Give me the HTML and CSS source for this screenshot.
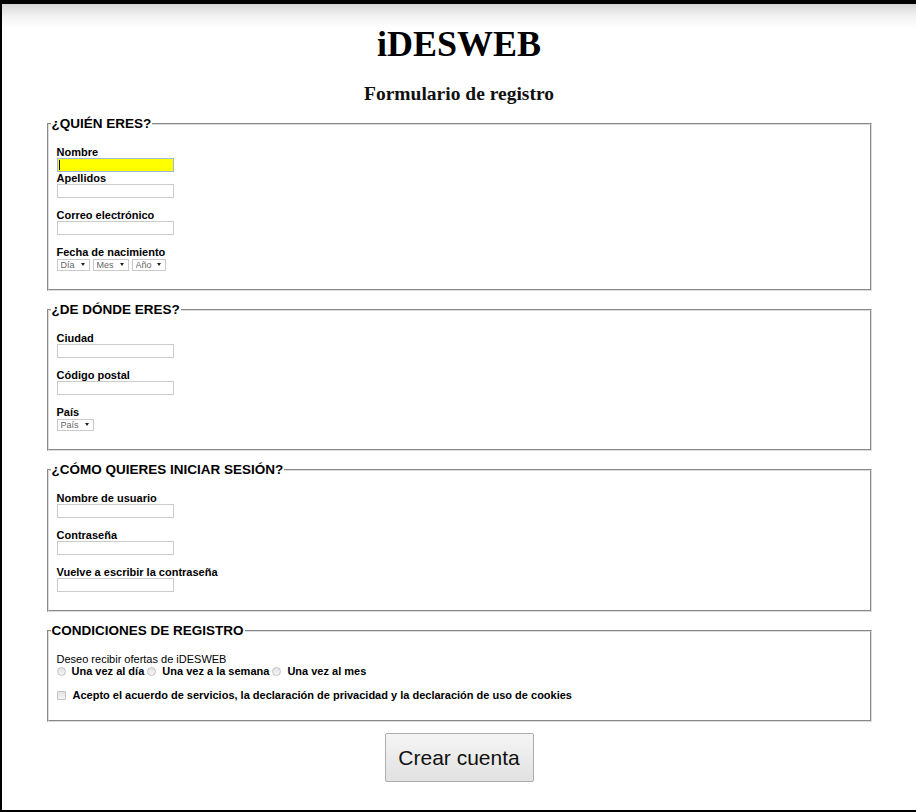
FILE: index.html
```html
<!DOCTYPE html>
<html lang="es">
<head>
<meta charset="utf-8">
<title>iDESWEB - Formulario de registro</title>
<link rel="stylesheet" href="styles.css">
</head>
<body>
<div class="page">
  <h1 class="logo">iDESWEB</h1>
  <h2 class="subtitle">Formulario de registro</h2>
  <form class="form">
    <fieldset class="group">
      <legend class="legend">¿QUIÉN ERES?</legend>
      <div class="group-body">
        <label class="label" for="nombre">Nombre</label>
        <span class="focus-wrap"><input class="field field--focus" id="nombre" type="text"></span>
        <label class="label" for="apellidos">Apellidos</label>
        <input class="field" id="apellidos" type="text">
        <label class="label label--spaced" for="correo">Correo electrónico</label>
        <input class="field" id="correo" type="email">
        <label class="label label--spaced" for="dia">Fecha de nacimiento</label>
        <div class="selects">
          <span class="sel"><select class="select select--dia" id="dia"><option>Día</option></select></span>
          <span class="sel"><select class="select select--mes"><option>Mes</option></select></span>
          <span class="sel"><select class="select select--anyo"><option>Año</option></select></span>
        </div>
      </div>
    </fieldset>

    <fieldset class="group">
      <legend class="legend">¿DE DÓNDE ERES?</legend>
      <div class="group-body">
        <label class="label" for="ciudad">Ciudad</label>
        <input class="field" id="ciudad" type="text">
        <label class="label label--spaced" for="cp">Código postal</label>
        <input class="field" id="cp" type="text">
        <label class="label label--spaced" for="pais">País</label>
        <div class="selects">
          <span class="sel"><select class="select select--pais" id="pais"><option>País</option></select></span>
        </div>
      </div>
    </fieldset>

    <fieldset class="group">
      <legend class="legend">¿CÓMO QUIERES INICIAR SESIÓN?</legend>
      <div class="group-body">
        <label class="label" for="usuario">Nombre de usuario</label>
        <input class="field" id="usuario" type="text">
        <label class="label label--spaced" for="pass">Contraseña</label>
        <input class="field" id="pass" type="password">
        <label class="label label--spaced" for="pass2">Vuelve a escribir la contraseña</label>
        <input class="field" id="pass2" type="password">
      </div>
    </fieldset>

    <fieldset class="group">
      <legend class="legend">CONDICIONES DE REGISTRO</legend>
      <div class="group-body">
        <div class="text">Deseo recibir ofertas de iDESWEB</div>
        <div class="options">
          <label class="option"><input class="radio" type="radio" name="ofertas">Una vez al día</label>
          <label class="option"><input class="radio" type="radio" name="ofertas">Una vez a la semana</label>
          <label class="option"><input class="radio" type="radio" name="ofertas">Una vez al mes</label>
        </div>
        <div class="options options--check">
          <label class="option"><input class="check" type="checkbox">Acepto el acuerdo de servicios, la declaración de privacidad y la declaración de uso de cookies</label>
        </div>
      </div>
    </fieldset>

    <button class="submit" type="submit">Crear cuenta</button>
  </form>
</div>
</body>
</html>
```

FILE: styles.css
```css
html, body {
  margin: 0;
  padding: 0;
  background: #fff;
}

.page {
  box-sizing: border-box;
  height: 812px;
  border-top: 4px solid #000;
  border-left: 2px solid #000;
  border-bottom: 2px solid #000;
  background: linear-gradient(#d6d6d6 0, #f2f2f2 12px, #fff 24px);
  padding-top: 20px;
  font-family: "Liberation Sans", Arial, sans-serif;
  color: #000;
}

.logo {
  margin: 0;
  font-family: "Liberation Serif", "Times New Roman", serif;
  font-weight: bold;
  font-size: 36px;
  line-height: 40px;
  text-align: center;
  color: #000;
}

.subtitle {
  margin: 19px 0 0;
  font-family: "Liberation Serif", "Times New Roman", serif;
  font-weight: bold;
  font-size: 19.5px;
  line-height: 22px;
  text-align: center;
  color: #111;
}

.form {
  width: 825px;
  margin: 11px auto 0;
}

.group {
  margin: 0 0 11px;
  padding: 14px 8px 18px 0;
  border: 2px groove #dcdcdc;
  min-width: 0;
}

.legend {
  padding: 0 1px;
  margin-left: 2px;
  font-size: 13.5px;
  line-height: 16px;
  font-weight: bold;
}

.group-body {
  padding-left: 8px;
}

.label {
  display: block;
  font-size: 11px;
  line-height: 12px;
  font-weight: bold;
}

.label--spaced {
  margin-top: 11px;
}

.field {
  display: block;
  box-sizing: border-box;
  width: 117px;
  height: 14px;
  margin: 0;
  padding: 0 2px;
  border: 1px solid #cbcbcb;
  background: #fff;
  font-size: 10px;
}

.focus-wrap {
  position: relative;
  display: block;
  width: 117px;
}

.field--focus {
  background: #ffff00;
  border-color: #9fb8d9;
  outline: none;
}

.focus-wrap::after {
  content: "";
  position: absolute;
  left: 2px;
  top: 2px;
  width: 1px;
  height: 10px;
  background: #000;
}

.selects {
  display: flex;
  gap: 3px;
  margin-top: 1px;
}

.sel {
  position: relative;
  display: block;
}

.sel::after {
  content: "";
  position: absolute;
  right: 5px;
  top: 4px;
  border-left: 2.5px solid transparent;
  border-right: 2.5px solid transparent;
  border-top: 3.5px solid #222;
}

.select {
  appearance: none;
  -webkit-appearance: none;
  display: block;
  box-sizing: border-box;
  height: 12px;
  margin: 0;
  padding: 0 0 0 3px;
  border: 1px solid #cacaca;
  border-radius: 0;
  background: #fff;
  font-family: "Liberation Sans", Arial, sans-serif;
  font-size: 9px;
  line-height: 10px;
  color: #666;
}

.select--dia { width: 33px; }
.select--mes { width: 36px; }
.select--anyo { width: 34px; }
.select--pais { width: 37px; }

.text {
  font-size: 11px;
  line-height: 12px;
}

.options {
  font-size: 11px;
  line-height: 13px;
  font-weight: bold;
  white-space: nowrap;
}

.options--check {
  margin-top: 11px;
}

.radio,
.check {
  appearance: none;
  -webkit-appearance: none;
  box-sizing: border-box;
  width: 9px;
  height: 9px;
  margin: 0 6px 0 0;
  border: 1px solid #c2c2c2;
  background: linear-gradient(#e2e2e2, #f6f6f6);
  vertical-align: -1px;
}

.radio {
  border-radius: 50%;
}

.check {
  border-radius: 1px;
  margin-right: 7px;
}

.submit {
  display: block;
  margin: 10px auto 0;
  width: 149px;
  height: 49px;
  padding: 0;
  border: 1px solid #adadad;
  border-radius: 2px;
  background: linear-gradient(#f5f5f5, #e1e1e1);
  font-family: "Liberation Sans", Arial, sans-serif;
  font-size: 21px;
  color: #111;
}
```
